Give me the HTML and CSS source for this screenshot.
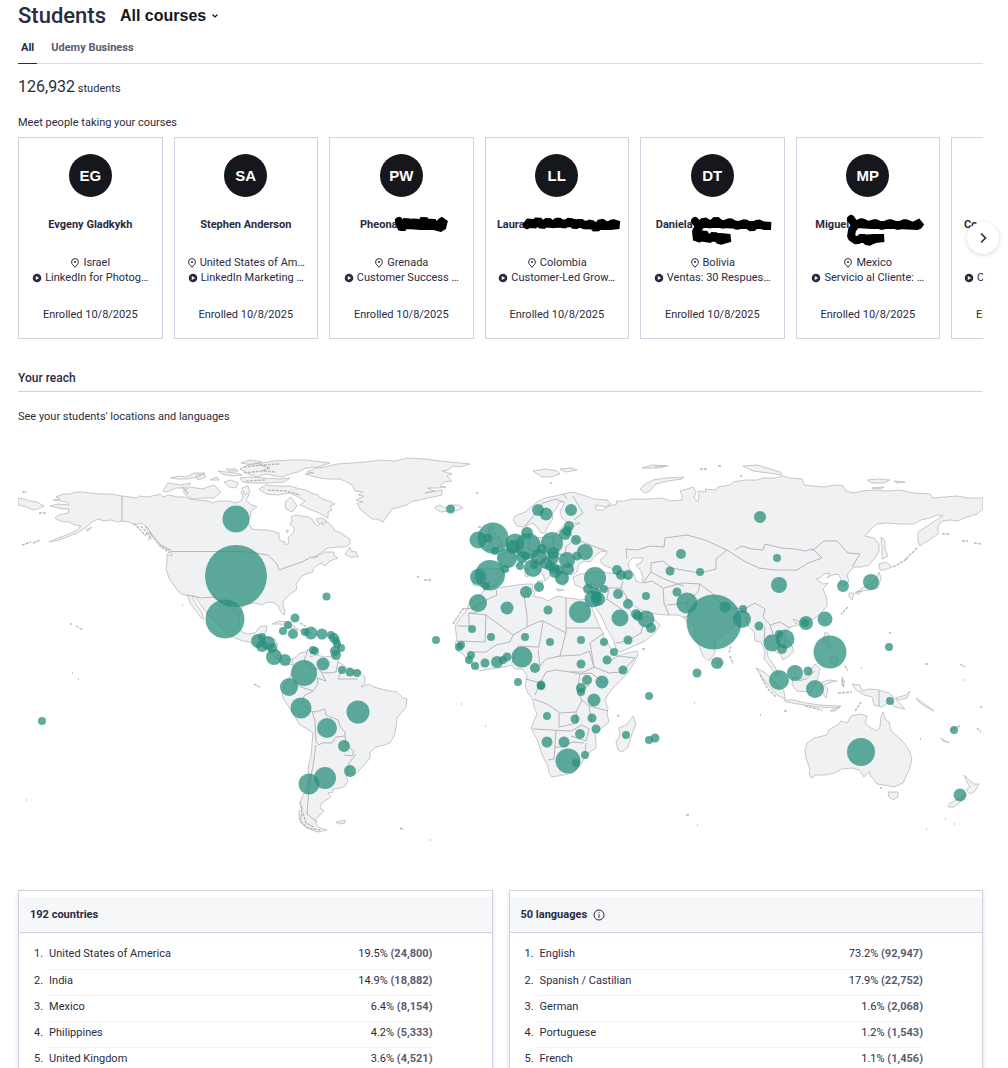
FILE: index.html
```html
<!DOCTYPE html>
<html lang="en">
<head>
<meta charset="utf-8">
<meta name="viewport" content="width=device-width, initial-scale=1">
<title>Students</title>
<link rel="stylesheet" href="styles.css">
</head>
<body>
<svg class="defs" aria-hidden="true">
  <symbol id="pin" viewBox="0 0 10 10"><path d="M5 9.300C3.500 7.500 1.600 6 1.600 4a3.400 3.400 0 0 1 6.800 0C8.400 6 6.500 7.500 5 9.300Z" fill="none" stroke="currentColor"/><circle cx="5" cy="4" r="1" fill="currentColor"/></symbol>
  <symbol id="play" viewBox="0 0 10 10"><circle cx="5" cy="5" r="4.300" fill="currentColor"/><path d="M3.800 2.900 7.200 5 3.800 7.100Z" fill="#fff"/></symbol>
</svg>
<main class="page">
  <header class="heading">
    <h1 class="title">Students</h1>
    <button class="picker" type="button">All courses
      <svg width="8" height="8" viewBox="0 0 8 8" aria-hidden="true"><path d="M1.500 2.500 4 5l2.500-2.500" fill="none" stroke="currentColor" stroke-width="1.200"/></svg>
    </button>
  </header>
  <nav class="tabs">
    <a class="tab tab-active" href="#all">All</a>
    <a class="tab" href="#business">Udemy Business</a>
  </nav>
  <p class="total"><span class="total-number">126,932</span> students</p>
  <p class="intro">Meet people taking your courses</p>

  <section class="carousel" aria-label="Recent students">
    <div class="track">
      <article class="card">
        <div class="avatar">EG</div>
        <h3 class="name">Evgeny Gladkykh</h3>
        <p class="meta"><svg class="icon"><use href="#pin"/></svg>Israel</p>
        <p class="meta"><svg class="icon"><use href="#play"/></svg>LinkedIn for Photog…</p>
        <p class="enrolled">Enrolled 10/8/2025</p>
      </article>
      <article class="card">
        <div class="avatar">SA</div>
        <h3 class="name">Stephen Anderson</h3>
        <p class="meta"><svg class="icon"><use href="#pin"/></svg>United States of Am…</p>
        <p class="meta"><svg class="icon"><use href="#play"/></svg>LinkedIn Marketing …</p>
        <p class="enrolled">Enrolled 10/8/2025</p>
      </article>
      <article class="card">
        <div class="avatar">PW</div>
        <h3 class="name">Pheona<svg class="scribble" width="52" height="15" viewBox="0 0 52 15" aria-hidden="true"><path d="M3 4 6 12 11 3 14 10 19 4 23 10 28 2 32 10 36 4 40 11 45 5 48 3 46 11 38 9 25 9 12 8 5 10"/></svg></h3>
        <p class="meta"><svg class="icon"><use href="#pin"/></svg>Grenada</p>
        <p class="meta"><svg class="icon"><use href="#play"/></svg>Customer Success …</p>
        <p class="enrolled">Enrolled 10/8/2025</p>
      </article>
      <article class="card">
        <div class="avatar">LL</div>
        <h3 class="name">Laura<svg class="scribble" width="99" height="15" viewBox="0 0 99 15" aria-hidden="true"><path d="M3 8 6 4 9 9 14 3 18 9 24 4 28 8 34 4 40 8 46 4 51 9 56 5 61 9 67 6 72 12 77 5 83 9 89 6 95 8 86 9 70 9 50 6 30 7 12 6"/></svg></h3>
        <p class="meta"><svg class="icon"><use href="#pin"/></svg>Colombia</p>
        <p class="meta"><svg class="icon"><use href="#play"/></svg>Customer-Led Grow…</p>
        <p class="enrolled">Enrolled 10/8/2025</p>
      </article>
      <article class="card">
        <div class="avatar">DT</div>
        <h3 class="name">Daniela<svg class="scribble" width="83" height="15" viewBox="0 0 83 15" aria-hidden="true"><path d="M3 4 7 9 12 4 19 8 24 3 30 8 38 5 45 9 53 6 60 11 66 6 72 9 79 9 68 8 50 8 30 7 10 7 4 14 5 23 12 16 16 23 22 18 28 24 35 22 38 21 28 20 12 21 6 19"/></svg></h3>
        <p class="meta"><svg class="icon"><use href="#pin"/></svg>Bolivia</p>
        <p class="meta"><svg class="icon"><use href="#play"/></svg>Ventas: 30 Respues…</p>
        <p class="enrolled">Enrolled 10/8/2025</p>
      </article>
      <article class="card">
        <div class="avatar">MP</div>
        <h3 class="name">Miguel<svg class="scribble" width="78" height="15" viewBox="0 0 78 15" aria-hidden="true"><path d="M3 2 7 8 14 5 20 8 27 6 34 9 42 6 50 9 57 6 65 9 73 5 70 9 50 8 24 8 8 7 4 13 3 20 9 24 14 20 20 25 27 22 36 21 26 21 12 22"/></svg></h3>
        <p class="meta"><svg class="icon"><use href="#pin"/></svg>Mexico</p>
        <p class="meta"><svg class="icon"><use href="#play"/></svg>Servicio al Cliente: …</p>
        <p class="enrolled">Enrolled 10/8/2025</p>
      </article>
      <article class="card card-cut">
        <div class="avatar"></div>
        <h3 class="name">Co</h3>
        <p class="meta"></p>
        <p class="meta"><svg class="icon"><use href="#play"/></svg>C</p>
        <p class="enrolled">Enrolled 10/8/2025</p>
      </article>
    </div>
    <button class="next" type="button" aria-label="Next students">
      <svg width="14" height="14" viewBox="0 0 14 14" aria-hidden="true"><path d="M5 2.500 9.500 7 5 11.500" fill="none" stroke="currentColor" stroke-width="1.600"/></svg>
    </button>
  </section>

  <h2 class="reach">Your reach</h2>
  <p class="reach-text">See your students' locations and languages</p>

  <svg class="map" viewBox="18 438 965 410" role="img" aria-label="Map of student locations">
    <g class="land">
      <!-- North America -->
      <path d="M53 499 60 498 56 496 63 493 70 493 75 491 83 491 90 492 100 493 111 493 122 495 130 496 136 497 140 495 147 496 157 494 160 493 163 496 169 494 177 496 185 496 190 498 196 499 209 500 212 502 218 500 228 500 236 502 241 500 243 496 241 491 246 490 249 494 246 499 250 503 257 506 251 510 250 517 248 521 252 528 261 529 268 529 279 532 279 537 282 541 284 540 286 544 289 542 288 537 290 535 294 531 294 527 290 523 292 520 291 516 295 514 302 515 308 516 312 518 315 523 318 525 322 521 323 524 327 521 332 525 335 530 339 531 345 535 350 538 350 543 345 546 337 546 328 547 320 552 313 557 319 554 325 551 334 551 334 555 338 557 330 560 325 565 321 562 316 565 313 568 313 571 306 573 301 576 299 579 296 583 297 588 293 591 287 596 283 600 283 604 285 610 284 614 281 611 278 605 275 602 269 601 265 602 262 604 255 602 247 603 242 606 240 611 239 620 239 627 242 631 248 633 254 632 257 630 258 627 262 625 267 625 266 631 264 634 267 637 275 638 277 643 277 648 281 655 285 659 293 658 297 662 293 664 288 663 283 661 275 656 270 650 265 646 257 644 250 641 243 640 235 637 226 632 220 626 212 618 206 611 200 603 195 595 192 595 196 603 202 612 204 618 201 617 196 610 190 602 188 595 182 593 178 590 173 583 169 577 166 568 167 560 167 553 172 555 171 551 166 547 160 543 155 537 151 532 147 526 141 522 135 524 129 521 123 520 117 521 111 519 104 520 98 518 92 521 85 527 77 532 67 536 59 539 49 541 58 537 69 533 77 529 81 525 75 524 69 521 60 520 55 517 59 514 68 512 69 508 63 508 54 506 50 505 58 503 69 504 67 501Z"/>
      <path d="M18 497 24 498 30 500 37 501 44 505 38 508 33 509 27 506 18 504ZM163 490 168 482 180 484 191 482 186 487 176 487 167 491ZM183 490 190 486 202 488 214 484 221 491 214 497 204 497 193 498 187 495ZM171 477 179 475 186 476 194 472 205 472 198 476 186 478 178 478ZM218 470 226 471 236 472 242 474 232 475 222 473ZM224 481 231 479 238 482 236 487 229 486ZM240 468 250 463 262 462 273 460 290 459 306 459 322 461 330 462 318 466 306 467 298 471 290 473 282 476 275 475 266 473 257 476 249 473ZM240 477 250 476 264 477 280 478 290 477 284 481 268 482 252 482 243 481ZM259 488 266 484 276 485 290 485 300 488 306 489 311 492 318 494 322 498 329 500 335 503 330 505 332 509 328 511 328 517 319 512 309 508 300 504 305 500 298 496 290 492 278 494 266 493ZM316 518 322 517 327 520 319 523ZM242 487 248 485 250 491 245 494ZM285 501 291 496 297 505 292 511 286 508ZM196 474 204 473 206 476 198 479ZM210 479 217 476 219 479ZM241 462 250 459 262 461 252 464ZM226 468 236 468 238 470 228 470ZM188 493 182 486 186 489ZM286 529 289 530 287 532Z"/>
      <path d="M305 473 314 472 307 471 317 467 325 466 337 463 352 462 366 461 380 459 395 460 407 457 425 458 440 460 450 461 470 463 460 466 453 465 448 469 442 470 452 473 447 475 452 480 444 481 440 485 446 486 438 487 427 487 435 490 425 492 442 489 442 494 433 496 427 497 420 499 413 500 407 504 400 506 392 508 388 514 383 521 377 518 372 518 366 513 360 508 357 502 363 501 356 499 364 495 358 494 363 491 355 490 352 484 347 481 340 478 327 478 315 476Z"/>
      <path d="M345 553 350 546 351 550 356 551 358 556 350 556ZM272 623 279 620 287 621 295 626 299 629 290 627 280 623ZM300 629 306 628 311 632 302 632ZM171 549 168 548 160 544 164 546ZM150 533 145 526 148 527 152 534ZM86 529 92 526 88 530Z"/>
      <path d="M435 506 440 504 445 507 452 504 459 504 463 507 456 510 448 510 441 511 436 508Z"/>
      <!-- South America -->
      <path d="M292 659 296 656 300 652 305 651 308 648 312 652 310 656 316 654 325 656 332 655 339 658 338 661 345 665 349 669 360 670 365 676 365 682 361 686 369 683 374 686 381 688 390 690 397 691 403 697 407 698 406 706 402 711 397 717 396 727 394 735 390 742 384 744 376 746 370 751 370 757 366 762 361 767 356 773 350 773 346 775 348 780 345 785 340 787 333 788 333 791 328 792 331 796 326 799 321 803 320 807 324 810 321 813 316 818 316 823 320 827 327 829 318 831 311 829 304 825 299 817 299 810 303 808 300 802 303 794 307 787 309 775 308 767 311 755 312 743 313 732 307 728 299 723 294 714 289 706 283 697 282 691 284 687 284 683 288 680 291 673 294 667Z"/>
      <path d="M336 821 345 819 345 822 338 823Z"/>
      <!-- Africa -->
      <path d="M485 588 491 590 497 587 510 585 517 584 527 583 533 583 532 588 535 592 533 595 542 597 548 600 553 597 558 595 567 597 576 598 580 599 588 598 592 607 595 615 598 622 603 632 604 637 608 642 613 652 618 655 627 652 637 650 638 654 634 662 628 672 618 682 612 688 607 695 605 700 608 707 607 713 609 721 603 726 595 732 596 740 596 747 590 751 584 758 580 765 573 772 563 774 552 776 549 772 548 765 543 756 540 747 537 738 531 728 534 720 537 713 534 706 533 699 528 692 525 685 527 675 524 670 522 668 515 668 512 664 504 666 498 667 490 668 480 670 474 666 468 660 463 653 458 650 455 644 457 638 455 625 460 617 466 610 469 602 475 598 481 593Z"/>
      <path d="M633 715 636 723 632 733 628 746 622 751 618 749 616 741 620 734 619 727 626 724Z"/>
      <!-- Europe and Asia -->
      <path d="M473 584 474 574 477 568 486 567 500 568 501 561 497 556 502 553 508 550 513 545 518 541 523 538 523 528 528 526 529 535 537 537 547 536 554 535 559 529 563 525 573 525 580 522 568 522 562 517 560 510 565 501 560 501 556 508 552 513 553 518 548 525 545 532 541 532 536 525 532 522 524 526 517 525 513 519 515 515 525 511 531 506 537 501 545 497 555 495 563 493 573 491 583 494 594 498 607 499 611 503 605 506 596 504 596 509 603 509 609 505 617 503 616 500 625 500 631 498 640 498 650 498 662 497 670 500 682 499 682 494 680 490 687 488 693 486 696 491 694 497 698 501 699 494 698 490 706 491 705 488 716 489 718 486 730 484 733 481 745 479 757 479 763 477 775 477 783 475 790 477 802 478 804 484 813 485 824 486 835 484 843 485 846 490 853 492 862 490 874 489 887 490 900 489 914 492 930 493 933 497 945 496 957 495 968 497 983 497 983 508 977 513 967 516 957 520 950 519 942 520 938 525 938 533 931 538 924 542 920 545 918 540 918 531 926 526 935 520 943 515 937 514 930 517 921 519 914 523 900 523 886 522 877 523 871 528 865 535 874 537 879 543 879 550 875 557 869 564 862 566 854 566 850 570 847 574 849 580 845 584 840 583 841 578 838 573 832 574 827 577 830 572 824 573 820 577 816 578 823 583 828 582 823 588 827 598 827 605 822 611 814 618 806 621 799 624 790 626 787 630 784 630 784 635 791 643 794 650 789 655 783 659 781 654 774 650 771 645 767 648 768 656 772 661 776 668 779 674 774 671 769 664 764 658 765 650 761 641 755 640 754 631 748 625 745 617 738 620 732 627 724 633 715 640 715 652 709 660 703 655 699 645 695 635 694 624 687 621 684 616 677 614 666 614 656 613 646 611 639 608 631 603 626 596 627 602 631 611 635 616 642 618 647 615 655 619 660 624 654 633 645 640 632 646 620 651 616 648 614 640 607 628 601 615 596 607 597 598 597 588 590 587 582 587 575 584 573 576 580 573 590 572 598 570 609 572 618 573 617 569 608 566 602 563 600 559 606 554 607 550 600 551 594 556 590 561 584 560 579 563 577 571 572 574 566 573 567 580 564 585 560 582 556 576 552 572 547 565 541 559 536 558 543 565 552 571 549 576 545 580 543 573 535 567 530 561 522 562 515 565 507 567 503 573 500 579 496 585 487 586 478 585Z"/>
      <path d="M482 543 478 537 485 534 489 539ZM488 526 494 525 492 530 499 536 503 545 495 548 487 549 491 541ZM537 580 543 580 542 584ZM525 567 528 567 528 576 525 575ZM556 588 564 589 558 590ZM586 590 592 588 588 591Z"/>
      <path d="M640 488 645 483 653 479 665 477 684 476 682 478 668 480 656 483 650 490 645 492ZM533 470 545 468 557 470 560 473 551 476 542 476ZM560 468 572 467 577 469 566 471ZM642 467 652 464 668 465 658 467ZM743 465 757 464 767 467 780 471 782 474 768 472 753 470ZM867 479 878 478 890 479 884 482 872 482ZM894 480 905 481 897 482ZM872 487 884 486 880 488Z"/>
      <path d="M881 536 885 540 885 548 888 555 882 558 882 548ZM879 563 886 561 892 566 884 569 880 569ZM879 571 881 577 878 587 870 589 862 590 855 592 862 587 870 583 876 577ZM849 592 854 592 852 599 849 596ZM856 591 862 590 858 594ZM721 657 724 662 719 667 716 662Z"/>
      <!-- Southeast Asia and Oceania -->
      <path d="M756 667 764 671 773 679 784 690 785 698 777 694 769 685 762 676ZM784 699 793 699 806 702 820 704 840 705 838 707 818 706 798 703 786 701ZM793 676 801 678 809 672 815 663 820 668 817 680 811 691 797 690 792 684ZM822 681 829 679 837 680 828 682 824 684 828 688 826 697 822 691ZM825 631 829 633 827 641 833 646 829 648 823 641ZM831 655 838 658 836 664 830 661ZM842 676 845 681 842 685ZM852 683 860 684 862 690 870 688 879 689 889 692 896 698 905 708 895 706 889 701 882 706 874 704 872 696 864 694 856 689ZM896 697 906 694 910 690 907 697 899 699ZM830 710 841 705 835 710ZM793 618 799 620 796 623Z"/>
      <path d="M807 742 814 737 827 734 829 729 833 726 838 724 841 720 847 722 851 715 860 713 867 715 865 722 871 727 877 730 880 726 881 716 883 711 886 719 889 721 891 730 898 736 905 743 910 751 912 759 909 769 903 782 894 786 884 784 877 783 873 777 870 775 870 770 864 776 859 769 852 767 842 768 834 772 825 774 816 774 811 777 809 773 810 768 806 757 805 749ZM888 791 898 791 898 796 893 799 889 796Z"/>
      <path d="M964 774 969 779 974 783 979 783 975 790 970 793 966 789 970 786 967 781ZM965 793 961 800 954 806 948 806 950 802 958 798ZM916 697 926 704 934 710 928 707 920 702ZM941 737 949 742 943 740Z"/>
    </g>
    <!-- Inland seas -->
    <path class="water" d="M628 562 633 557 643 557 641 562 636 564 641 570 643 576 642 582 636 580 634 573 629 568Z"/>
    <path class="borders" d="M122 495V520M171 550.500H240L255 552 268 554 277 563 279 569 293 564 302 561 311 556 318 556M187 594 201 597 214 596 224 603 236 611M252 639 258 634 262 637M268 642 278 643M276 655 281 654
      M308 648 304 660 312 667 319 668 321 671 326 680 317 677 318 683 313 690 301 686 293 681M338 661 336 671 328 672 321 671M342 669 338 678 347 678 358 678M313 690 304 695 302 702 310 710 315 711 325 708 326 714 338 719 340 725 345 731 345 735 336 736 332 742 322 742 319 744 316 741 315 720 312 710M345 735 346 744 354 750 352 755 344 754M356 753 349 762 347 774M316 744 313 765 309 785 308 800 307 813 317 821
      M483 589 496 588 497 594 484 600 474 607 463 608M469 612 486 614 513 634 527 626 527 614 524 594M457 625 469 625 469 612 477 612M486 614 485 641 457 640M513 634 510 641 496 644 486 651 474 651M526 586 529 597M527 626 540 620 543 620 566 632 566 597M543 620 539 646 518 645 512 662M566 627H600M566 632 560 655 546 658 540 665 538 649M560 655 580 654 589 650 594 666 584 671 570 671M594 666 609 672 622 671 635 657 618 655 610 660M594 666 590 642 604 632M526 678 540 682 546 671 556 669 570 671 580 673 577 690 582 699 576 711 560 712 547 703 534 698M540 682 535 694M580 673 591 672 606 683M577 690 590 684M582 699 589 705 608 710M576 711 577 722 559 726 559 712M533 728 571 730 582 724 589 728 586 740 571 735M556 730 554 758 548 759M554 746 562 746 573 741 584 742M589 705 592 722M586 742 585 752
      M478 568 481 573 480 584M500 568 510 570M515 543 523 555 523 562M523 555 536 552 543 557M530 537 529 548 541 552 552 552 565 555M553 535 554 550 565 555 573 570M565 527 575 538 566 546 565 555M553 570 561 571M575 538 590 544 606 550M525 525 535 513 543 502 556 498 563 501M563 493 567 498M573 495 583 512 574 519M617 573 630 578M596 588 609 587 621 587 623 580M609 587 607 598 597 605M607 598 624 610M621 587 631 603M616 642 627 640 641 632 643 623M643 582 652 580 663 587 664 602 669 614M627 558 626 548 637 549 650 545 664 546 665 537 687 534 705 539 727 549 716 558 716 568 700 572 694 571 671 567 663 560 651 562 651 571 664 578 675 582 684 585M643 582 651 571M735 549 742 545 752 548 763 549 765 543 781 547 795 548 805 550 813 548 822 557 808 562 797 569 775 569 759 567 744 560 727 549M812 550 824 540 837 540 848 552 860 553 852 566M664 587 682 582 700 583 698 591 686 602 667 604M686 602 690 614 683 617M700 583 712 592 718 600 733 607 744 608 755 602 765 608 763 616 770 624 780 621 790 627M745 610 748 625M765 626 764 640M770 624 773 633 786 640 783 647M798 680 806 678 815 670M879 689V706"/>
    <!-- Reefs and small islands -->
    <path class="specks" d="M22 544 31 541M33 542 40 539M70 623h2M76 625 83 629M72 672h1M78 678h1M254 683 260 686M22 491h5M39 512h8M150 536 148 540M182 604h1M453 623 464 606M417 576h2M424 579h7M300 622 307 626M478 526h3M476 492h2M550 482h2M700 468h8M718 465h4M740 475h2M731 645 729 652M730 655 733 663M848 606 841 613M889 632h2M925 663h3M960 663 965 666M964 679h1M980 706h2M977 727 981 731M960 725 951 729M686 814h3M697 824h1M400 827 404 829M430 839h1M784 710h3M760 714h1M694 702h1M816 653h1M861 667h1M26 799h1M942 533h8M962 540h6M974 542 981 543M905 558h2M845 665 848 670M842 679 844 686M838 692 852 691M855 710 862 700M920 738h1M945 818h1M954 823h1M926 828h1M880 787h2M642 648h4M617 714 620 716M461 703h1M485 725h1M134 522 145 534 150 532 160 545 170 552M141 525 152 538M244 466 262 464 280 463M244 472 262 470 276 471M246 480 266 479M268 489 286 490 300 494M255 462 270 467 262 470M300 801 302 812 300 820 308 827 320 829M303 812 306 822 314 826M843 538 843 538M893 566 904 560 918 546M760 674 768 688 776 696M805 705 822 709M655 465h10"/>
    <g class="dots">
      <circle cx="42" cy="720" r="4"/><circle cx="236" cy="518" r="13.500"/><circle cx="236" cy="575" r="31"/><circle cx="225" cy="618" r="19.500"/><circle cx="258" cy="640" r="7"/><circle cx="262" cy="636" r="4"/><circle cx="262" cy="645" r="6"/><circle cx="268" cy="642" r="7"/><circle cx="272" cy="647" r="5"/><circle cx="274" cy="656" r="8"/><circle cx="285" cy="659" r="6"/><circle cx="295" cy="617" r="4.500"/><circle cx="288" cy="624" r="4"/><circle cx="283" cy="630" r="4"/><circle cx="293" cy="633" r="5"/><circle cx="305" cy="631" r="4"/><circle cx="311" cy="632" r="6.500"/><circle cx="322" cy="633" r="5.500"/><circle cx="331" cy="634" r="4"/><circle cx="334" cy="637" r="5"/><circle cx="336" cy="640" r="4"/><circle cx="337" cy="643" r="4"/><circle cx="341" cy="647" r="4"/><circle cx="335" cy="650" r="5"/><circle cx="336" cy="654" r="5"/><circle cx="313" cy="649" r="4"/><circle cx="315" cy="650" r="4"/><circle cx="304" cy="672" r="13"/><circle cx="323" cy="663" r="6.500"/><circle cx="342" cy="669" r="4"/><circle cx="350" cy="671" r="4.500"/><circle cx="357" cy="672" r="4"/><circle cx="289" cy="686" r="9"/><circle cx="301" cy="707" r="10.500"/><circle cx="358" cy="711" r="11.500"/><circle cx="327" cy="727" r="10"/><circle cx="344" cy="745" r="6"/><circle cx="350" cy="770" r="6"/><circle cx="325" cy="777" r="11"/><circle cx="309" cy="783" r="10.500"/><circle cx="436" cy="639" r="4"/><circle cx="326.500" cy="595.500" r="4"/><circle cx="450.500" cy="508" r="4.500"/>
      <circle cx="478" cy="539" r="8.500"/><circle cx="493" cy="537" r="15.500"/><circle cx="488" cy="537" r="4.500"/><circle cx="495" cy="550" r="4"/><circle cx="538" cy="509" r="6"/><circle cx="546" cy="513" r="6.500"/><circle cx="571" cy="509" r="6"/><circle cx="569" cy="525" r="5"/><circle cx="567" cy="530" r="5"/><circle cx="565" cy="533" r="6"/><circle cx="576" cy="539" r="5"/><circle cx="527" cy="532" r="6"/><circle cx="515" cy="542" r="9.500"/><circle cx="513" cy="546" r="7"/><circle cx="528" cy="545" r="13"/><circle cx="552" cy="542" r="11"/><circle cx="507" cy="557" r="10"/><circle cx="522" cy="556" r="6"/><circle cx="526" cy="555" r="4"/><circle cx="542" cy="548" r="5"/><circle cx="539" cy="556" r="8"/><circle cx="553" cy="552" r="6"/><circle cx="553" cy="557" r="6"/><circle cx="567" cy="559" r="8"/><circle cx="577" cy="555" r="4.500"/><circle cx="585" cy="551" r="8"/><circle cx="533" cy="567" r="9"/><circle cx="534" cy="564" r="4"/><circle cx="520" cy="565" r="4"/><circle cx="505" cy="568" r="4"/><circle cx="490" cy="574" r="15"/><circle cx="478" cy="576" r="8"/><circle cx="486" cy="585" r="4"/><circle cx="546" cy="562" r="6"/><circle cx="550" cy="565" r="5"/><circle cx="554" cy="567" r="5"/><circle cx="555" cy="571" r="6"/><circle cx="559" cy="569" r="5"/><circle cx="568" cy="568" r="6"/><circle cx="562" cy="577" r="7"/><circle cx="539" cy="586" r="5"/>
      <circle cx="526" cy="591" r="6"/><circle cx="478" cy="602" r="9"/><circle cx="507" cy="607" r="6.500"/><circle cx="548" cy="609" r="4.500"/><circle cx="580" cy="611" r="11"/><circle cx="595" cy="577" r="11"/><circle cx="617" cy="569" r="5"/><circle cx="621" cy="574" r="5"/><circle cx="628" cy="574" r="5"/><circle cx="588" cy="588" r="5"/><circle cx="596" cy="592" r="5"/><circle cx="604" cy="588" r="4"/><circle cx="593" cy="598" r="8.500"/><circle cx="598" cy="598" r="7"/><circle cx="596" cy="596" r="5.500"/><circle cx="618" cy="593" r="5"/><circle cx="646" cy="595" r="4"/><circle cx="628" cy="603" r="5"/><circle cx="620" cy="617" r="8.500"/><circle cx="636" cy="613" r="5"/><circle cx="638" cy="615" r="5"/><circle cx="646" cy="618" r="8.500"/><circle cx="651" cy="627" r="5"/><circle cx="628" cy="639" r="4.500"/>
      <circle cx="472" cy="628" r="4"/><circle cx="491" cy="636" r="4"/><circle cx="525" cy="636" r="4"/><circle cx="550" cy="641" r="4"/><circle cx="581" cy="639" r="4"/><circle cx="604" cy="641" r="4"/><circle cx="614" cy="651" r="4"/><circle cx="607" cy="659" r="4.500"/><circle cx="581" cy="663" r="4.500"/><circle cx="461" cy="644" r="4"/><circle cx="459" cy="646" r="4"/><circle cx="471" cy="654" r="4"/><circle cx="469" cy="659" r="4"/><circle cx="475" cy="665" r="4"/><circle cx="485" cy="662" r="4.500"/><circle cx="497" cy="661" r="6"/><circle cx="503" cy="659" r="4"/><circle cx="507" cy="656" r="4.500"/><circle cx="522" cy="656" r="10.500"/><circle cx="535" cy="667" r="5"/><circle cx="518" cy="681" r="4"/><circle cx="541" cy="684" r="4.500"/><circle cx="541" cy="685" r="4"/><circle cx="587" cy="679" r="5"/><circle cx="602" cy="681" r="6.500"/><circle cx="581" cy="687" r="5"/><circle cx="581" cy="691" r="4"/><circle cx="594" cy="699" r="6.500"/><circle cx="623" cy="669" r="4.500"/><circle cx="649" cy="695" r="4"/><circle cx="547" cy="715" r="4"/><circle cx="575" cy="718" r="4.500"/><circle cx="592" cy="717" r="4.500"/><circle cx="596" cy="728" r="4.500"/><circle cx="580" cy="733" r="5"/><circle cx="547" cy="741" r="5.500"/><circle cx="564" cy="741" r="5.500"/><circle cx="568" cy="760" r="12.500"/><circle cx="576" cy="762" r="4"/><circle cx="585" cy="754" r="4"/><circle cx="626" cy="734" r="4"/><circle cx="649" cy="739" r="4"/><circle cx="655" cy="737" r="4.500"/>
      <circle cx="760" cy="516" r="6"/><circle cx="681" cy="553" r="5"/><circle cx="670" cy="570" r="4.500"/><circle cx="700" cy="571" r="4"/><circle cx="777" cy="557" r="4"/><circle cx="779" cy="584" r="8"/><circle cx="843" cy="585" r="6"/><circle cx="871" cy="581" r="8"/><circle cx="677" cy="591" r="4.500"/><circle cx="687" cy="602" r="10.500"/><circle cx="714" cy="621" r="27.500"/><circle cx="725" cy="606" r="5.500"/><circle cx="743" cy="608" r="4"/><circle cx="742" cy="618" r="9"/><circle cx="759" cy="625" r="4.500"/><circle cx="772" cy="642" r="8.500"/><circle cx="779" cy="633" r="4"/><circle cx="785" cy="638" r="9.500"/><circle cx="782" cy="648" r="5"/><circle cx="806" cy="622" r="7"/><circle cx="805" cy="622" r="4"/><circle cx="825" cy="618" r="7.500"/><circle cx="830" cy="651" r="16.500"/><circle cx="889" cy="646" r="4"/><circle cx="717" cy="662" r="6"/><circle cx="697" cy="672" r="4.500"/><circle cx="779" cy="679" r="10"/><circle cx="795" cy="672" r="8"/><circle cx="808" cy="670" r="4.500"/><circle cx="815" cy="688" r="9"/><circle cx="890" cy="700" r="4"/><circle cx="861" cy="751" r="14"/><circle cx="954" cy="729" r="4"/><circle cx="960" cy="794" r="6.500"/>
    </g>
  </svg>

  <div class="panels">
    <section class="panel">
      <h2 class="panel-title">192 countries</h2>
      <table class="ranks">
        <tr><td class="rank">1.</td><td>United States of America</td><td class="share">19.5% <strong>(24,800)</strong></td></tr>
        <tr><td class="rank">2.</td><td>India</td><td class="share">14.9% <strong>(18,882)</strong></td></tr>
        <tr><td class="rank">3.</td><td>Mexico</td><td class="share">6.4% <strong>(8,154)</strong></td></tr>
        <tr><td class="rank">4.</td><td>Philippines</td><td class="share">4.2% <strong>(5,333)</strong></td></tr>
        <tr><td class="rank">5.</td><td>United Kingdom</td><td class="share">3.6% <strong>(4,521)</strong></td></tr>
      </table>
    </section>
    <section class="panel">
      <h2 class="panel-title">50 languages
        <svg width="12" height="12" viewBox="0 0 12 12" role="img" aria-label="About languages"><circle cx="6" cy="6" r="5" fill="none" stroke="currentColor"/><path d="M6 5.200V8.800M6 3.200V4.200" stroke="currentColor"/></svg>
      </h2>
      <table class="ranks">
        <tr><td class="rank">1.</td><td>English</td><td class="share">73.2% <strong>(92,947)</strong></td></tr>
        <tr><td class="rank">2.</td><td>Spanish / Castilian</td><td class="share">17.9% <strong>(22,752)</strong></td></tr>
        <tr><td class="rank">3.</td><td>German</td><td class="share">1.6% <strong>(2,068)</strong></td></tr>
        <tr><td class="rank">4.</td><td>Portuguese</td><td class="share">1.2% <strong>(1,543)</strong></td></tr>
        <tr><td class="rank">5.</td><td>French</td><td class="share">1.1% <strong>(1,456)</strong></td></tr>
      </table>
    </section>
  </div>
</main>
</body>
</html>
```
FILE: styles.css
```css
* { box-sizing: border-box; }

body {
  margin: 0;
  background: #fff;
  color: #2a2b3f;
  font: 11px/15px Roboto, "Liberation Sans", sans-serif;
}

h1, h2, h3, p { margin: 0; font-size: inherit; }

.defs { position: absolute; width: 0; height: 0; }

.page { padding: 3px 25px 0 18px; }

.heading { display: flex; align-items: center; gap: 14px; height: 26px; }
.title { font-size: 22px; line-height: 26px; font-weight: 500; }
.picker {
  display: flex; align-items: center; gap: 5px;
  padding: 0; border: 0; background: none; cursor: pointer;
  color: #16161d; font: 700 16px/26px "Liberation Sans", Arial, sans-serif;
}

.tabs { display: flex; gap: 11px; margin-top: 8px; border-bottom: 1px solid #dcdce8; }
.tab { padding: 3px 3px 8px; margin-bottom: -1px; color: #595c73; font-weight: 700; line-height: 15px; text-decoration: none; }
.tab-active { color: #2a2b3f; border-bottom: 1px solid #2a2b3f; }

.total { margin-top: 13px; line-height: 20px; }
.total-number { font-size: 16px; }
.intro { margin: 16px 0 7px; }

.carousel { position: relative; }
.track { display: grid; grid-auto-flow: column; grid-auto-columns: calc((100% - 98px) / 6); gap: 11px; overflow: hidden; }
.card {
  display: flex; flex-direction: column; align-items: center;
  padding: 16px 12px; border: 1px solid #d1d2e0; white-space: nowrap;
}
.avatar {
  display: grid; place-items: center; width: 43px; height: 43px;
  border-radius: 50%; background: #16161d; color: #fff;
  font: 700 15px/20px "Liberation Sans", Arial, sans-serif;
}
.name { display: flex; height: 15px; margin: 20px 0 23px; }
.scribble { flex: none; margin: 0 -6px 0 -1px; overflow: visible; }
.scribble path { fill: none; stroke: #000; stroke-width: 8; stroke-linejoin: bevel; stroke-linecap: round; }
.meta { display: flex; align-items: center; gap: 3px; height: 15px; }
.icon { width: 10px; height: 10px; flex: none; }
.enrolled { margin-top: 22px; }
.card-cut .avatar { visibility: hidden; }
.card-cut .name, .card-cut .meta { align-self: flex-start; }
.next {
  position: absolute; right: -16px; top: 50%; transform: translateY(-50%);
  display: grid; place-items: center; width: 32px; height: 32px; padding: 0;
  border: 0; border-radius: 50%; background: #fff; color: #2a2b3f; cursor: pointer;
  box-shadow: 0 1px 5px rgba(60, 60, 110, 0.2);
}

.reach { margin-top: 32px; padding-bottom: 5px; border-bottom: 1px solid #d1d2e0; font-size: 12px; font-weight: 500; line-height: 15px; }
.reach-text { margin: 17px 0 15px; }

.map { display: block; width: 100%; height: auto; }
.land { fill: #f0f1f3; stroke: #b9babd; stroke-width: 0.8; stroke-linejoin: round; }
.water { fill: #fff; stroke: #b9babd; stroke-width: 0.8; }
.borders { fill: none; stroke: #b5b6b9; stroke-width: 1; stroke-linejoin: round; }
.specks { fill: none; stroke: #b9babd; stroke-width: 1.4; stroke-dasharray: 3 1; }
.dots { fill: #2a8f7d; fill-opacity: 0.75; }

.panels { display: grid; grid-template-columns: 1fr 1fr; gap: 16px; margin-top: 41px; }
.panel { padding-top: 6px; border: 1px solid #d1d2e0; border-bottom: 0; box-shadow: 0 2px 5px rgba(60, 60, 110, 0.15); }
.panel-title {
  display: flex; align-items: center; gap: 6px; height: 36px; padding: 0 11px;
  background: #f6f7f9; border-bottom: 1px solid #d1d2e0;
}
.ranks { width: calc(100% - 74px); margin: 10px 0 0 15px; border-collapse: collapse; }
.ranks td { height: 26px; padding: 0 0 4px; border-bottom: 1px solid #f3f3f6; }
.ranks td + td { padding-left: 3px; }
.ranks .rank { width: 12px; padding-right: 3px; border-color: transparent; text-align: right; }
.ranks td.share { padding-left: 0; text-align: right; }
.ranks strong { color: #595c73; }
```
